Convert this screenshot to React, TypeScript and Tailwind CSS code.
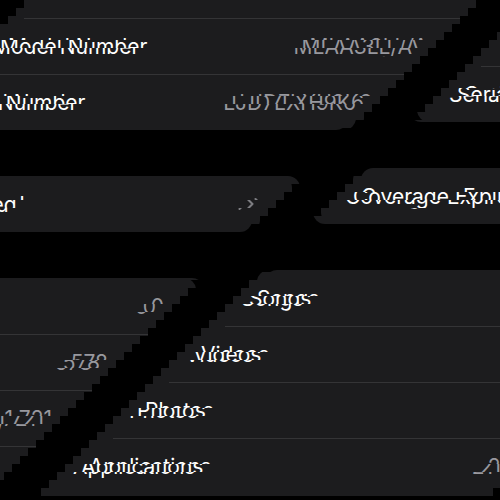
import React from 'react';
import { ChevronRight } from 'lucide-react';

// The screen is shown as a wrapped, stair-stepped shear: every 8px strip is
// shifted 8px further left, and what falls off the left edge comes back on the
// right one strip lower in the source.
const STRIP = 8;
const STRIPS = 63;

interface RowProps {
  label: string;
  value?: string;
  chevron?: boolean;
  divider?: boolean;
}

const Row: React.FC<RowProps> = ({ label, value, chevron, divider }) => (
  <div className="flex h-14 items-center pl-4">
    <div
      className={`flex h-full flex-1 items-center justify-between pr-4 ${
        divider ? 'border-t border-[#343436]' : ''
      }`}
    >
      <span className="text-white">{label}</span>
      {value && <span className="text-[#98989e]">{value}</span>}
      {chevron && <ChevronRight className="h-5 w-5 text-[#7d7d82]" strokeWidth={2.5} />}
    </div>
  </div>
);

const Sheet: React.FC = () => (
  <div className="flex h-[504px] w-[500px] flex-col overflow-hidden bg-black px-6 font-['Inter','Noto_Sans',sans-serif] text-[21px] leading-none">
    <div className="rounded-b-xl bg-[#1c1c1e]">
      <div className="h-[18px]" />
      <Row label="Model Number" value="MLAA3LL/A" divider />
      <Row label="Serial Number" value="LJD7LXH9K6" divider />
    </div>

    <div className="mt-[46px] rounded-xl bg-[#1c1c1e]">
      <Row label="Coverage Expired" chevron />
    </div>

    <div className="mt-[46px] flex-1 rounded-t-xl bg-[#1c1c1e]">
      <Row label="Songs" value="0" />
      <Row label="Videos" value="578" divider />
      <Row label="Photos" value="1,721" divider />
      <Row label="Applications" value="21" divider />
    </div>
  </div>
);

const Slice: React.FC<{ from: number }> = ({ from }) => (
  <div className="h-2 w-[500px] shrink-0 overflow-hidden">
    <div style={{ marginTop: -from }}>
      <Sheet />
    </div>
  </div>
);

export default function App() {
  const strips = Array.from({ length: STRIPS }, (_, k) => k);

  return (
    <div className="h-[500px] w-[500px] overflow-hidden bg-black">
      {strips.map((k) => (
        <div key={k} className="h-2 overflow-hidden">
          <div className="flex w-[1010px] gap-[5px]" style={{ transform: `translateX(${-STRIP * k}px)` }}>
            <Slice from={STRIP * k} />
            <Slice from={STRIP * (k + 1)} />
          </div>
        </div>
      ))}
    </div>
  );
}
